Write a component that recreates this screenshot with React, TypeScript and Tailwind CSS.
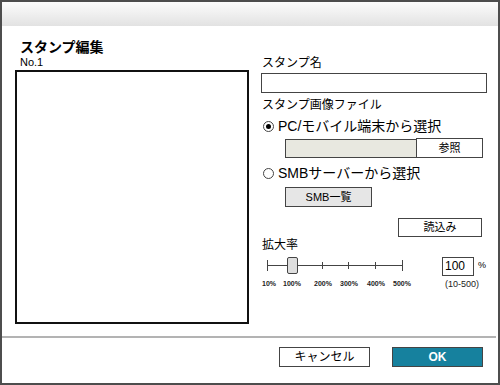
import React from 'react';

const font = { fontFamily: '"Liberation Sans", "Noto Sans CJK JP", sans-serif' };

function Radio({ checked, label }: { checked?: boolean; label: string }) {
    return (
        <div className="flex items-center h-[16px]">
            <span className="w-[11px] h-[11px] ml-[2px] rounded-full border border-[#444] bg-white flex items-center justify-center">
                {checked && <span className="w-[5px] h-[5px] rounded-full bg-black" />}
            </span>
            <span className="ml-[4px] text-[14px] leading-[16px] text-black">{label}</span>
        </div>
    );
}

export default function App() {
    return (
        <div style={font} className="w-[500px] h-[385px] border-2 border-[#4d4d4d] bg-white flex flex-col text-black">
            {/* Header */}
            <div className="h-[24px] bg-linear-to-b from-[#fcfcfc] to-[#e2e2e2]" />

            {/* Content */}
            <div className="flex h-[310px]">
                {/* Left column */}
                <div className="w-[259px] pl-[13px] flex flex-col">
                    <h1 className="mt-[13px] ml-[5px] text-[14px] leading-[16px] font-bold">スタンプ編集</h1>
                    <p className="ml-[5px] mt-[1px] text-[11px] leading-[13px]">No.1</p>
                    <div className="mt-[1px] w-[234px] h-[254px] border-2 border-[#111] bg-white" />
                </div>

                {/* Right column */}
                <div className="flex-1 flex flex-col">
                    <p className="mt-[30px] ml-[1px] text-[12px] leading-[14px]">スタンプ名</p>
                    <input className="mt-[3px] w-[226px] h-[20px] border border-[#444] bg-white outline-none" />

                    <p className="mt-[5px] ml-[1px] text-[12px] leading-[14px]">スタンプ画像ファイル</p>
                    <div className="mt-[6px]">
                        <Radio checked label="PC/モバイル端末から選択" />
                    </div>
                    <div className="mt-[4px] ml-[24px] flex items-end">
                        <div className="w-[131px] h-[19px] border border-[#444] border-r-0 bg-[#e8e8e0]" />
                        <button className="w-[67px] h-[20px] border border-[#444] bg-white text-[11px] leading-[18px]">参照</button>
                    </div>

                    <div className="mt-[7px]">
                        <Radio label="SMBサーバーから選択" />
                    </div>
                    <button className="mt-[6px] ml-[24px] w-[87px] h-[20px] border border-[#444] bg-[#e6e6e6] text-[11px] leading-[18px]">
                        SMB一覧
                    </button>

                    <div className="mt-[11px] w-[221px] flex justify-end">
                        <button className="w-[84px] h-[19px] border border-[#444] bg-white text-[11px] leading-[17px]">読込み</button>
                    </div>

                    <p className="mt-[2px] ml-[1px] text-[12px] leading-[13px]">拡大率</p>

                    {/* Zoom slider */}
                    <div className="mt-[4px] flex items-center h-[20px]">
                        <div className="relative w-[150px] h-[20px]">
                            <svg width="150" height="20" className="absolute left-0 top-0">
                                <line x1="6" y1="9.5" x2="141" y2="9.5" stroke="#444" strokeWidth="1" />
                                <line x1="6.5" y1="4" x2="6.5" y2="15" stroke="#444" strokeWidth="1" />
                                <line x1="141.5" y1="4" x2="141.5" y2="15" stroke="#444" strokeWidth="1" />
                                <line x1="61.5" y1="6" x2="61.5" y2="13" stroke="#444" strokeWidth="1" />
                                <line x1="87.5" y1="6" x2="87.5" y2="13" stroke="#444" strokeWidth="1" />
                                <line x1="114.5" y1="6" x2="114.5" y2="13" stroke="#444" strokeWidth="1" />
                            </svg>
                            <div className="absolute left-[26px] top-[1px] w-[11px] h-[17px] rounded-[2px] border border-[#444] bg-[#dedede]" />
                        </div>
                        <input
                            readOnly
                            value="100"
                            className="ml-[31px] w-[32px] h-[19px] border border-[#444] bg-white px-[2px] text-[12px] outline-none"
                        />
                        <span className="ml-[4px] text-[9px]">%</span>
                    </div>
                    <div className="relative h-[14px] mt-[1px] text-[7px] leading-[14px] font-bold text-[#222]">
                        <span className="absolute left-[1px]">10%</span>
                        <span className="absolute left-[22px]">100%</span>
                        <span className="absolute left-[53px]">200%</span>
                        <span className="absolute left-[79px]">300%</span>
                        <span className="absolute left-[106px]">400%</span>
                        <span className="absolute left-[132px]">500%</span>
                        <span className="absolute left-[184px] text-[9px] font-normal">(10-500)</span>
                    </div>
                </div>
            </div>

            {/* Separator */}
            <div className="h-[2px] mr-[2px] bg-[#b3b3b3]" />

            {/* Footer */}
            <div className="flex-1 flex justify-end gap-[22px] pt-[9px] pr-[15px]">
                <button className="w-[91px] h-[20px] border border-[#444] bg-white text-[12px] leading-[18px]">キャンセル</button>
                <button className="w-[91px] h-[20px] border border-[#444] bg-[#16819e] text-white text-[12px] leading-[18px] font-bold">OK</button>
            </div>
        </div>
    );
}
